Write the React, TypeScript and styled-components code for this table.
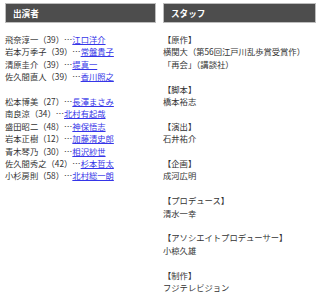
import React from 'react'
import styled, { createGlobalStyle } from 'styled-components';

const GlobalStyle = createGlobalStyle`
  body {
    margin: 0;
    background: #fff;
    font-family: "Noto Sans CJK JP", "Noto Sans", sans-serif;
  }
`;

const Page = styled.div`
  display: grid;
  grid-template-columns: 151px 153px;
  column-gap: 7px;
  padding: 3px 0 0 5px;
`;

const Column = styled.section`
  display: flex;
  flex-direction: column;
`;

const Heading = styled.h2`
  margin: 0;
  height: 20px;
  box-sizing: border-box;
  display: flex;
  align-items: center;
  padding-left: 7px;
  background: #4d4d4d;
  border: 1px solid #bdbdbd;
  color: #fff;
  font-size: 8.6px;
  font-weight: bold;
`;

const Body = styled.div`
  margin-top: 10px;
  font-size: 8.3px;
  line-height: 12.4px;
  color: #333;
`;

const Group = styled.div`
  margin-bottom: 12.4px;
`;

const Line = styled.div`
  white-space: nowrap;
`;

const Actor = styled.a`
  color: #3535e8;
  text-decoration: underline;
`;

type Cast = { name: string; age: number; actor: string };

const castGroups: Cast[][] = [
  [
    { name: '飛奈淳一', age: 39, actor: '江口洋介' },
    { name: '岩本万季子', age: 39, actor: '常盤貴子' },
    { name: '清原圭介', age: 39, actor: '堤真一' },
    { name: '佐久間直人', age: 39, actor: '香川照之' },
  ],
  [
    { name: '松本博美', age: 27, actor: '長澤まさみ' },
    { name: '南良涼', age: 34, actor: '北村有起哉' },
    { name: '盛田昭二', age: 48, actor: '神保悟志' },
    { name: '岩本正樹', age: 12, actor: '加藤清史郎' },
    { name: '青木琴乃', age: 30, actor: '相沢紗世' },
    { name: '佐久間秀之', age: 42, actor: '杉本哲太' },
    { name: '小杉房則', age: 58, actor: '北村総一朗' },
  ],
];

const staff: { role: string; lines: string[] }[] = [
  { role: '原作', lines: ['横関大（第56回江戸川乱歩賞受賞作）', '「再会」（講談社）'] },
  { role: '脚本', lines: ['橋本裕志'] },
  { role: '演出', lines: ['石井祐介'] },
  { role: '企画', lines: ['成河広明'] },
  { role: 'プロデュース', lines: ['清水一幸'] },
  { role: 'アソシエイトプロデューサー', lines: ['小椋久雄'] },
  { role: '制作', lines: ['フジテレビジョン'] },
];

export default function App() {
  return (
    <Page>
      <GlobalStyle />
      <Column>
        <Heading>出演者</Heading>
        <Body>
          {castGroups.map((group, i) => (
            <Group key={i}>
              {group.map((c) => (
                <Line key={c.name}>
                  {c.name}（{c.age}）…<Actor href="#">{c.actor}</Actor>
                </Line>
              ))}
            </Group>
          ))}
        </Body>
      </Column>
      <Column>
        <Heading>スタッフ</Heading>
        <Body>
          {staff.map((s) => (
            <Group key={s.role}>
              <Line>【{s.role}】</Line>
              {s.lines.map((l) => (
                <Line key={l}>{l}</Line>
              ))}
            </Group>
          ))}
        </Body>
      </Column>
    </Page>
  );
}
